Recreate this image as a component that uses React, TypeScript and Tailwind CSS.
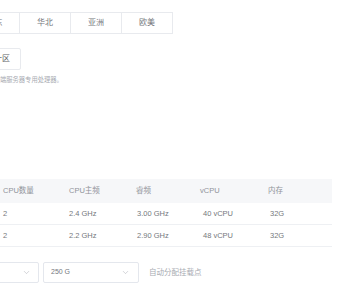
import React from 'react';
import { ChevronDown } from 'lucide-react';

const regions = ["华东", "华北", "亚洲", "欧美"];

const columns = ["CPU数量", "CPU主频", "睿频", "vCPU", "内存"];

const rows = [
  ["2", "2.4 GHz", "3.00 GHz", "40 vCPU", "32G"],
  ["2", "2.2 GHz", "2.90 GHz", "48 vCPU", "32G"],
];

const App: React.FC = () => {
  return (
    <div
      className="w-[340px] h-[286px] overflow-hidden bg-white"
      style={{ fontFamily: '"Liberation Sans", "Noto Sans CJK SC", sans-serif' }}
    >
      {/* Region tabs */}
      <div className="flex ml-[-31px] mt-[12px]">
        {regions.map((r, i) => (
          <div
            key={r}
            className={`w-[51px] h-[22px] flex items-center justify-center border border-[#e8eaee] text-[8px] text-[#75787d] ${
              i > 0 ? 'border-l-0' : ''
            }`}
          >
            {r}
          </div>
        ))}
      </div>

      {/* Zone */}
      <div className="flex mt-[14px] ml-[-33px]">
        <div className="h-[22px] px-[10px] flex items-center border border-[#e8eaee] rounded-[2px] text-[8px] text-[#606266]">
          华东一区
        </div>
      </div>
      <div className="mt-[6px] ml-[-19px] text-[6.3px] leading-[8px] text-[#a8abb2] whitespace-nowrap">
        采用云端服务器专用处理器。
      </div>

      {/* Spec table */}
      <div className="mt-[95px] w-[332px] text-[7.5px]">
        <div className="grid grid-cols-[66px_67px_64px_68px_1fr] h-[24px] items-center bg-[#f6f7f9] pl-[3px] text-[#909399]">
          {columns.map((c) => (
            <div key={c}>{c}</div>
          ))}
        </div>
        {rows.map((row, ri) => (
          <div
            key={ri}
            className="grid grid-cols-[66px_67px_64px_68px_1fr] h-[22px] items-center border-b border-[#eef0f3] pl-[3px] text-[#75787d]"
          >
            <div>{row[0]}</div>
            <div>{row[1]}</div>
            <div className="pl-[1px]">{row[2]}</div>
            <div className="pl-[3px]">{row[3]}</div>
            <div className="pl-[2px]">{row[4]}</div>
          </div>
        ))}
      </div>

      {/* Disk selects */}
      <div className="flex items-center mt-[15px]">
        <div className="w-[60px] ml-[-21px] h-[21px] border border-[#e4e7ed] rounded-[2px] flex items-center justify-end pr-[7px]">
          <ChevronDown className="w-[9px] h-[9px] text-[#a8abb2]" strokeWidth={1.3} />
        </div>
        <div className="w-[96px] ml-[4px] h-[21px] border border-[#e4e7ed] rounded-[2px] flex items-center justify-between pl-[7px] pr-[8px]">
          <span className="text-[7px] text-[#75787d]">250 G</span>
          <ChevronDown className="w-[9px] h-[9px] text-[#a8abb2]" strokeWidth={1.3} />
        </div>
        <span className="ml-[10px] text-[7.5px] text-[#a8abb2]">自动分配挂载点</span>
      </div>
    </div>
  );
};

export default App;
